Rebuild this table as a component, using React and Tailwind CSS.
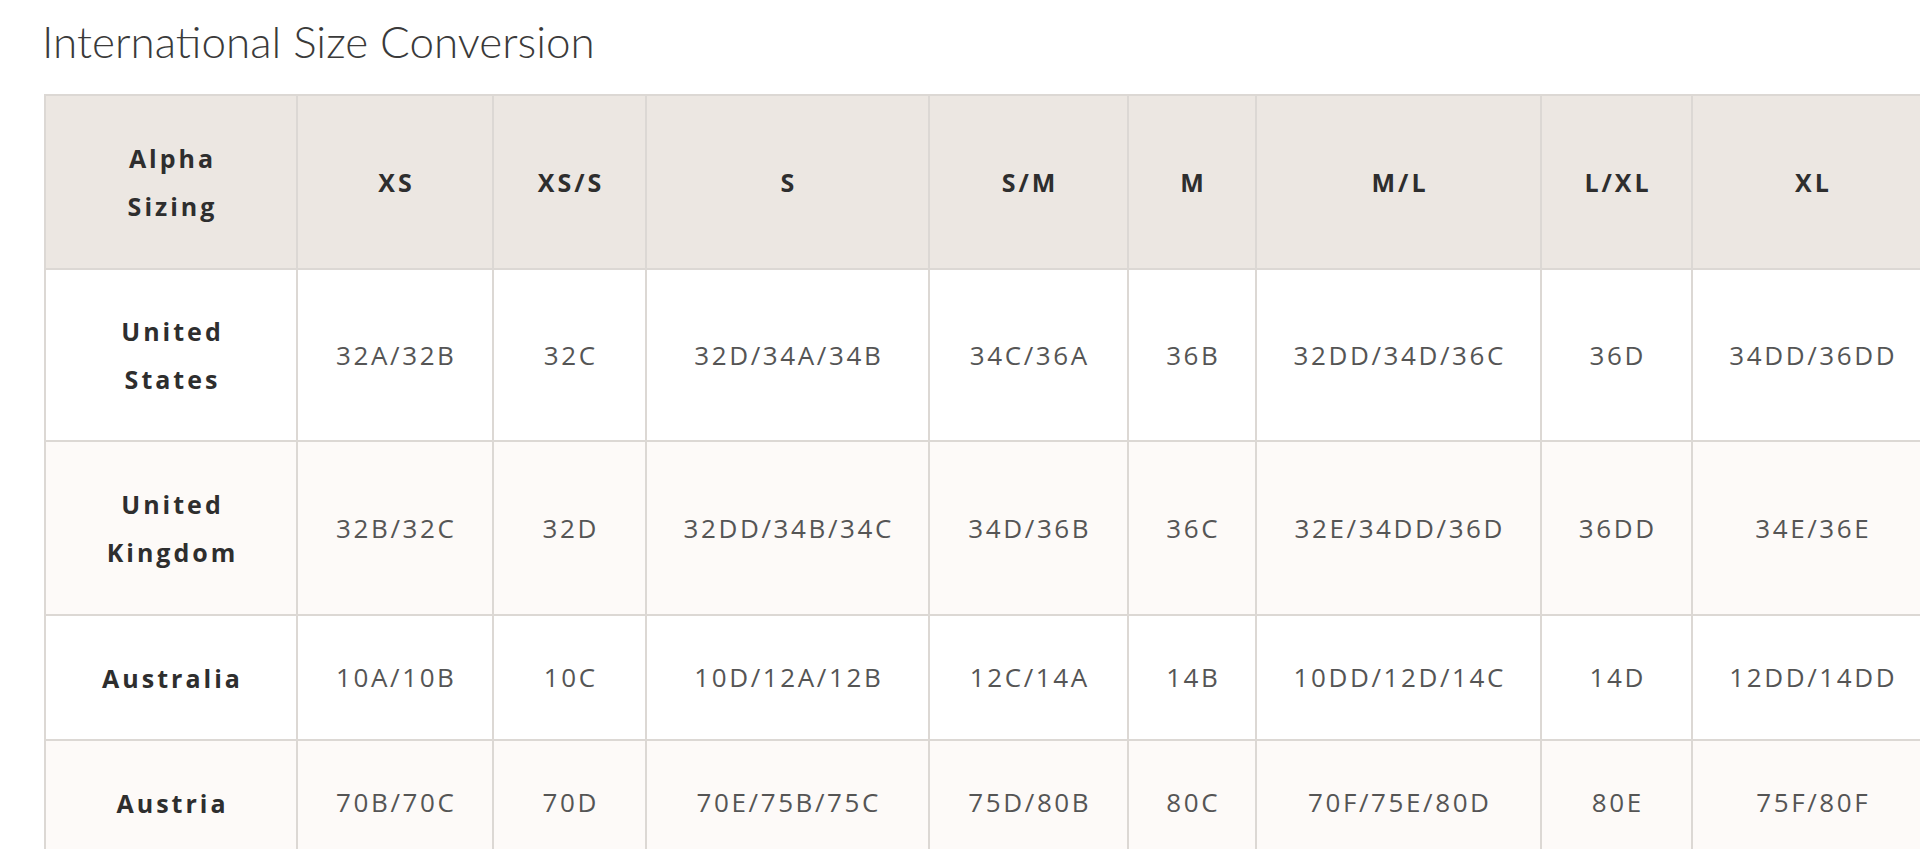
import React from 'react';

const cols = [
  { label: ['Alpha', 'Sizing'], w: 'w-[252px]' },
  { label: ['XS'], w: 'w-[196px]' },
  { label: ['XS/S'], w: 'w-[153px]' },
  { label: ['S'], w: 'w-[283px]' },
  { label: ['S/M'], w: 'w-[199px]' },
  { label: ['M'], w: 'w-[128px]' },
  { label: ['M/L'], w: 'w-[285px]' },
  { label: ['L/XL'], w: 'w-[151px]' },
  { label: ['XL'], w: 'w-[240px]' },
];

const rows = [
  { name: ['United', 'States'], h: 'h-[172px]', bg: 'bg-white', vals: ['32A/32B', '32C', '32D/34A/34B', '34C/36A', '36B', '32DD/34D/36C', '36D', '34DD/36DD'] },
  { name: ['United', 'Kingdom'], h: 'h-[174px]', bg: 'bg-[#fdfaf8]', vals: ['32B/32C', '32D', '32DD/34B/34C', '34D/36B', '36C', '32E/34DD/36D', '36DD', '34E/36E'] },
  { name: ['Australia'], h: 'h-[125px]', bg: 'bg-white', vals: ['10A/10B', '10C', '10D/12A/12B', '12C/14A', '14B', '10DD/12D/14C', '14D', '12DD/14DD'] },
  { name: ['Austria'], h: 'h-[125px]', bg: 'bg-[#fdfaf8]', vals: ['70B/70C', '70D', '70E/75B/75C', '75D/80B', '80C', '70F/75E/80D', '80E', '75F/80F'] },
];

export default function App() {
  return (
    <div className="w-[1920px] h-[849px] overflow-hidden bg-white">
      <div className="pl-[42px] pt-[11px]">
        {/* Title */}
        <h2 className="text-[44px] leading-[60px] font-light text-[#3a3a3a] font-['Lato',sans-serif]">
          International Size Conversion
        </h2>

        {/* Conversion table */}
        <table className="mt-[23px] ml-[2px] table-fixed border-collapse w-[1887px] font-['Open_Sans',sans-serif]">
          <thead>
            <tr className="h-[174px] bg-[#ece7e2]">
              {cols.map((c, i) => (
                <th key={i} className={`${c.w} border-2 border-[#dcd8d4] pl-[0.12em] tracking-[0.12em] text-center align-middle text-[25px] leading-[48px] font-bold text-[#2e2e2e]`}>
                  {c.label.map((l, j) => (
                    <div key={j}>{l}</div>
                  ))}
                </th>
              ))}
            </tr>
          </thead>
          <tbody>
            {rows.map((r, i) => (
              <tr key={i} className={`${r.h} ${r.bg}`}>
                <td className="border-2 border-[#dcd8d4] pl-[0.12em] tracking-[0.12em] text-center align-middle text-[25px] leading-[48px] font-bold text-[#2e2e2e]">
                  {r.name.map((l, j) => (
                    <div key={j}>{l}</div>
                  ))}
                </td>
                {r.vals.map((v, j) => (
                  <td key={j} className="border-2 border-[#dcd8d4] pl-[0.1em] tracking-[0.1em] text-center align-middle text-[26px] text-[#555555]">
                    {v}
                  </td>
                ))}
              </tr>
            ))}
          </tbody>
        </table>
      </div>
    </div>
  );
}
